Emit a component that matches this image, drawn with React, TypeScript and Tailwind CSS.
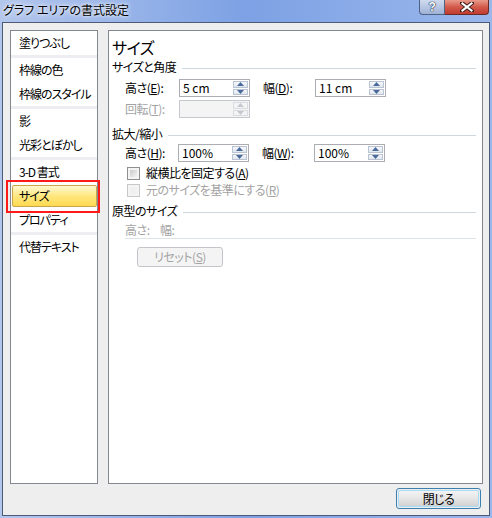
import React from "react";

const FONT =
  "font-['Noto_Sans_CJK_JP','Noto_Sans_CJK_SC',sans-serif] [font-feature-settings:'palt'] tracking-[-0.5px]";

function Arrow({ up, disabled }: { up?: boolean; disabled?: boolean }) {
  return (
    <svg width="7" height="4" viewBox="0 0 7 4">
      <polygon
        points={up ? "0,4 7,4 3.5,0" : "0,0 7,0 3.5,4"}
        fill={disabled ? "#c4c8cf" : "#4a6a9c"}
      />
    </svg>
  );
}

function Spin({ disabled }: { disabled?: boolean }) {
  const half = disabled
    ? "flex-1 flex items-center justify-center border border-[#d9dce1] bg-[#f4f4f4]"
    : "flex-1 flex items-center justify-center border border-[#b9c3d2] bg-gradient-to-b from-[#f6f8fb] to-[#dfe6ef]";
  return (
    <div className="w-[16px] flex flex-col gap-[1px] py-[1px] pr-[1px]">
      <div className={half}>
        <Arrow up disabled={disabled} />
      </div>
      <div className={half}>
        <Arrow disabled={disabled} />
      </div>
    </div>
  );
}

function Field({ value, disabled }: { value: string; disabled?: boolean }) {
  return (
    <div
      className={
        "w-[71px] h-[18px] flex border " +
        (disabled ? "border-[#c5c8cd] bg-[#f4f4f4]" : "border-[#abadb3] bg-white")
      }
    >
      <div className="flex-1 pl-[3px] text-[12px] leading-[16px] text-black tracking-normal whitespace-pre">
        {value}
      </div>
      <Spin disabled={disabled} />
    </div>
  );
}

function SectionHead({ label, mt }: { label: string; mt: string }) {
  return (
    <div className={"h-[16px] flex items-center gap-[6px] pl-[3px] " + mt}>
      <span className="text-[12px] leading-[16px] text-black whitespace-nowrap">{label}</span>
      <div className="flex-1 h-[1px] bg-[#ccd7e0] mt-[2px]" />
    </div>
  );
}

function Check({ label, disabled }: { label: React.ReactNode; disabled?: boolean }) {
  return (
    <div className="flex items-center h-[16px] pl-[18px]">
      <div
        className={
          "w-[13px] h-[13px] border p-[2px] " +
          (disabled ? "border-[#c8c8c8] bg-[#f4f4f4]" : "border-[#8e8f8f] bg-[#f4f4f4]")
        }
      >
        <div
          className={
            "w-full h-full " +
            (disabled
              ? "bg-[#f0f0f0]"
              : "bg-gradient-to-br from-[#cbcbcb] to-[#f3f3f3]")
          }
        />
      </div>
      <span
        className={
          "ml-[6px] text-[12px] leading-[16px] whitespace-nowrap " +
          (disabled ? "text-[#a3a3a3]" : "text-black")
        }
      >
        {label}
      </span>
    </div>
  );
}

const groups: string[][] = [
  ["塗りつぶし"],
  ["枠線の色", "枠線のスタイル"],
  ["影", "光彩とぼかし"],
  ["3-D 書式", "サイズ", "プロパティ"],
  ["代替テキスト"],
];

export default function App() {
  return (
    <div
      className={
        "w-[492px] h-[518px] flex flex-col bg-gradient-to-r from-[#b3c6ec] via-[#7da1e4] to-[#9ab7ec] " +
        FONT
      }
    >
      {/* Title bar */}
      <div className="h-[22px] flex items-start">
        <div className="pl-[3px] pt-[1px] text-[12px] leading-[18px] text-black tracking-normal [text-shadow:0_0_6px_#ffffff,0_0_3px_#ffffff]">
          グラフ エリアの書式設定
        </div>
        <div className="ml-auto mr-[3px] flex h-[15px]">
          <div className="w-[26px] h-[15px] rounded-bl-[4px] border border-t-0 border-[#4e6284] bg-gradient-to-b from-[#d0dbef] to-[#9fb2d6] flex items-center justify-center">
            <span className="text-[12px] leading-[12px] font-bold text-white [text-shadow:0_0_1px_#1f2d4a,0_0_1px_#1f2d4a,0_0_1px_#1f2d4a] font-['Liberation_Sans',sans-serif]">
              ?
            </span>
          </div>
          <div className="w-[44px] h-[15px] rounded-br-[4px] border border-l-0 border-t-0 border-[#6b2b28] bg-gradient-to-b from-[#e79a8b] via-[#d2594b] to-[#c03c2f] flex items-center justify-center">
            <svg width="14" height="10" viewBox="0 0 14 10">
              <path d="M2 1 L12 9 M12 1 L2 9" stroke="#3a1a18" strokeWidth="4" strokeLinecap="square" />
              <path d="M2.5 1.5 L11.5 8.5 M11.5 1.5 L2.5 8.5" stroke="#ffffff" strokeWidth="2.2" strokeLinecap="square" />
            </svg>
          </div>
        </div>
      </div>

      {/* Body */}
      <div className="flex-1 ml-[2px] mr-[2px] mb-[2px] border border-[#4d5b78] bg-[#eeeeee] flex flex-col pl-[7px] pr-[6px] pt-[7px]">
        <div className="h-[454px] flex gap-[10px]">
          {/* Left list */}
          <div className="w-[88px] border border-[#828790] bg-white flex flex-col tracking-[-1px]">
            {groups.map((g, gi) => (
              <React.Fragment key={gi}>
                {gi > 0 && <div className="h-[3px] bg-[#ededf2]" />}
                {g.map((item) => {
                  const sel = item === "サイズ";
                  return sel ? (
                    <div key={item} className="relative h-[24px] pt-[1px] pl-[1px]">
                      <div className="h-[22px] rounded-[2px] border border-[#c9a54c] bg-gradient-to-b from-[#fff8cf] via-[#ffe77e] to-[#ffd94f] flex items-center pl-[6px] text-[12px] text-black">
                        {item}
                      </div>
                      <div className="absolute left-[-5px] top-[-4px] w-[94px] h-[33px] border-2 border-[#ff1a1a]" />
                    </div>
                  ) : (
                    <div
                      key={item}
                      className="h-[24px] flex items-center pl-[8px] text-[12px] text-black whitespace-nowrap"
                    >
                      {item}
                    </div>
                  );
                })}
              </React.Fragment>
            ))}
          </div>

          {/* Right panel */}
          <div className="flex-1 border border-[#828790] bg-white flex flex-col pr-[6px]">
            <div className="h-[20px] mt-[6px] pl-[3px] text-[16px] leading-[20px] text-black font-normal">
              サイズ
            </div>
            <SectionHead label="サイズと角度" mt="mt-[2px]" />
            <div className="mt-[4px] h-[18px] flex items-center pl-[16px]">
              <span className="w-[54px] text-[12px] leading-[16px] text-black whitespace-nowrap">
                高さ(<u>E</u>):
              </span>
              <Field value="5 cm" />
              <span className="ml-[13px] w-[52px] text-[12px] leading-[16px] text-black whitespace-nowrap">
                幅(<u>D</u>):
              </span>
              <Field value="11 cm" />
            </div>
            <div className="mt-[3px] h-[18px] flex items-center pl-[16px]">
              <span className="w-[54px] text-[12px] leading-[16px] text-[#a3a3a3] whitespace-nowrap">
                回転(<u>T</u>):
              </span>
              <Field value="" disabled />
            </div>
            <SectionHead label="拡大/縮小" mt="mt-[8px]" />
            <div className="mt-[2px] h-[18px] flex items-center pl-[16px]">
              <span className="w-[53px] text-[12px] leading-[16px] text-black whitespace-nowrap">
                高さ(<u>H</u>):
              </span>
              <Field value="100%" />
              <span className="ml-[13px] w-[52px] text-[12px] leading-[16px] text-black whitespace-nowrap">
                幅(<u>W</u>):
              </span>
              <Field value="100%" />
            </div>
            <div className="mt-[3px]">
              <Check
                label={
                  <>
                    縦横比を固定する(<u>A</u>)
                  </>
                }
              />
            </div>
            <div className="mt-[1px]">
              <Check
                disabled
                label={
                  <>
                    元のサイズを基準にする(<u>R</u>)
                  </>
                }
              />
            </div>
            <SectionHead label="原型のサイズ" mt="mt-[5px]" />
            <div className="mt-[3px] h-[16px] flex items-center pl-[16px] text-[12px] leading-[16px] text-[#a3a3a3]">
              <span className="w-[35px]">高さ:</span>
              <span>幅:</span>
            </div>
            <div className="ml-[16px] h-[1px] bg-[#dde3e8]" />
            <div className="mt-[8px] ml-[28px] w-[86px] h-[20px] rounded-[3px] border border-[#c2c5c9] bg-[#f4f4f4] flex items-center justify-center text-[12px] text-[#a3a3a3]">
              リセット(<u>S</u>)
            </div>
          </div>
        </div>
        <div className="mt-[4px] flex justify-end pr-[2px]">
          <div className="w-[85px] h-[21px] rounded-[3px] border border-[#3c7fb1] p-[1px]">
            <div className="w-full h-full rounded-[2px] border border-[#a9dcf7] bg-gradient-to-b from-[#f3f3f3] via-[#e6e6e6] to-[#d2d2d2] flex items-center justify-center text-[12px] text-black">
              閉じる
            </div>
          </div>
        </div>
      </div>
    </div>
  );
}
